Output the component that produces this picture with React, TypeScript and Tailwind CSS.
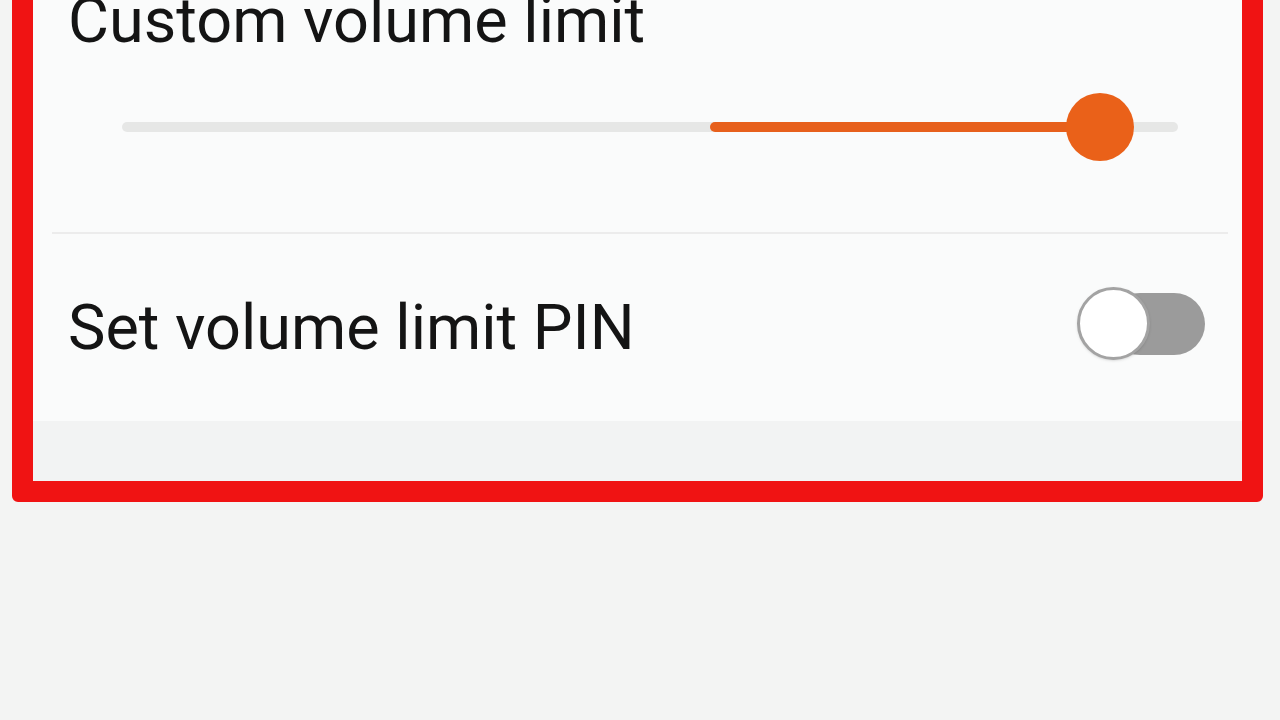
import React from 'react';

const Slider = ({ start, value }: { start: number; value: number }): React.ReactElement => (
  <div className="relative h-[70px] ml-[89px] w-[1056px] flex items-center">
    <div className="h-[10px] w-full rounded-full bg-[#e6e7e6]" />
    <div
      className="absolute h-[10px] rounded-full bg-[#e7601c]"
      style={{ left: `${start * 100}%`, width: `${(value - start) * 100}%` }}
    />
    <div
      className="absolute h-[68px] w-[68px] rounded-full bg-[#ea6119] -translate-x-1/2"
      style={{ left: `${value * 100}%` }}
    />
  </div>
);

const Toggle = (): React.ReactElement => (
  <div className="relative h-[73px] w-[128px] shrink-0 mb-[8px]">
    <div className="absolute right-0 top-[6px] h-[62px] w-[96px] rounded-full bg-[#9b9b9b]" />
    <div className="absolute left-0 top-0 h-[73px] w-[73px] rounded-full bg-white border-[3px] border-[#a3a3a3] shadow-sm" />
  </div>
);

export default function App(): React.ReactElement {
  return (
    <div className="h-[720px] w-[1280px] overflow-hidden bg-[#f3f4f3] font-['Roboto',sans-serif] text-[#141414]">
      <div className="mt-[-60px] ml-[12px] w-[1251px] border-[21px] border-[#f01313] rounded-[6px] bg-[#fafbfb] flex flex-col">
        <div className="pt-[28px] pb-[70px]">
          <p className="pl-[35px] text-[63px] leading-[64px]">Custom volume limit</p>
          <div className="mt-[39px]">
            <Slider start={0.557} value={0.926} />
          </div>
        </div>
        <div className="mx-[19px] mr-[14px] h-[2px] bg-[#ececec]" />
        <div className="h-[187px] flex items-center justify-between pl-[35px] pr-[37px]">
          <p className="text-[63px] leading-[64px]">Set volume limit PIN</p>
          <Toggle />
        </div>
        <div className="h-[60px] bg-[#f2f3f3]" />
      </div>
    </div>
  );
}
